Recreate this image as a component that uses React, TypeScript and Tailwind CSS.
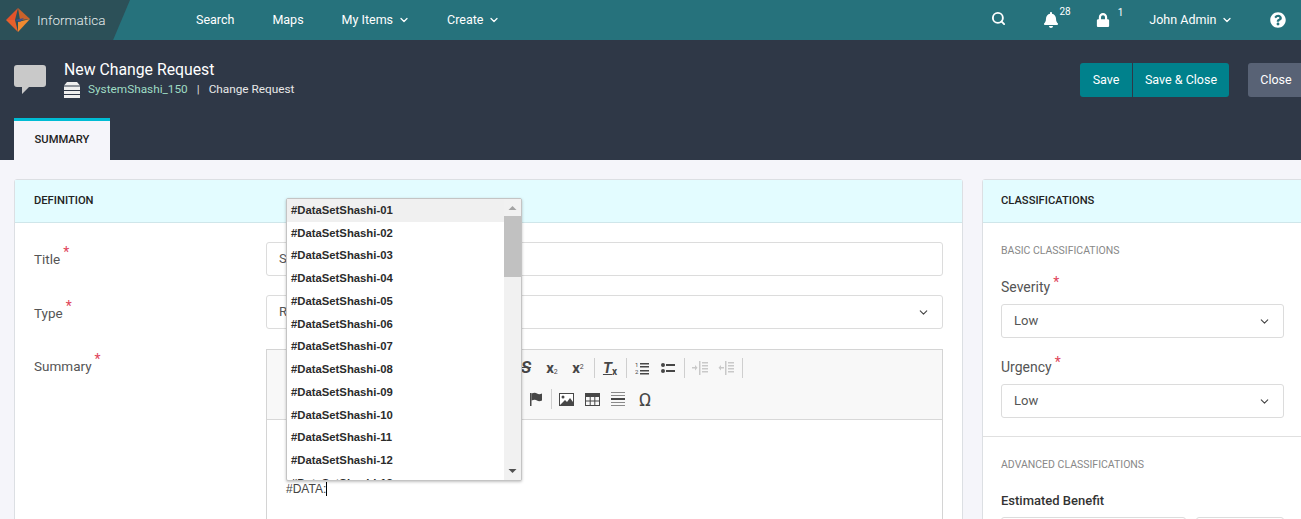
import { ChevronDown, Search } from 'lucide-react'
import { FaBell, FaLock, FaQuestionCircle } from 'react-icons/fa'

const items = ['01', '02', '03', '04', '05', '06', '07', '08', '09', '10', '11', '12', '13']

function Star() {
  return <span className="ml-[3px] -translate-y-[4px] text-[14px] leading-none text-[#e0455a]">*</span>
}

function Sep({ className = '' }: { className?: string }) {
  return <span className={`ml-[3px] mr-[2px] h-[20px] w-px bg-[#cfcfcf] ${className}`} />
}

function Btn({ children }: { children: React.ReactNode }) {
  return <span className="flex h-[26px] w-[26px] items-center justify-center text-[#474747]">{children}</span>
}

function Lines({ indent }: { indent?: boolean }) {
  return (
    <svg width="16" height="14" viewBox="0 0 16 14" fill="#c9c9c9">
      <rect x="7" y="0" width="1.5" height="14" />
      <rect x="10" y="1" width="6" height="1.5" />
      <rect x="10" y="4" width="6" height="1.5" />
      <rect x="10" y="7" width="6" height="1.5" />
      <rect x="10" y="10" width="6" height="1.5" />
      {indent ? <path d="M0 6h3V4l2.5 2.7L3 9.4V7.4H0z" /> : <path d="M6 6H3V4L0.5 6.7 3 9.4V7.4h3z" />}
    </svg>
  )
}

function Select({ value }: { value: string }) {
  return (
    <div className="flex h-[34px] items-center justify-between rounded-[3px] border border-[#dcdcdc] bg-white pl-3 pr-[12px] text-[13px] text-[#555]">
      <span>{value}</span>
      <ChevronDown size={13} strokeWidth={2} className="text-[#444]" />
    </div>
  )
}

export default function App() {
  return (
    <div className="relative h-[519px] w-[1301px] overflow-hidden bg-[#f5f5fa] font-['Roboto',sans-serif]">
      {/* top nav */}
      <div className="flex h-10 items-center bg-[#26727c] text-[12.5px] text-white">
        <div className="flex h-10 w-[130px] shrink-0 items-center bg-[#2c5058] pl-[6px] [clip-path:polygon(0_0,100%_0,87%_100%,0_100%)]">
          <svg width="24" height="24" viewBox="0 0 24 24">
            <path d="M12 0 L24 11 L14 12 Z" fill="#c9622a" />
            <path d="M12 0 L0 12 L9 12 Z" fill="#e2532a" />
            <path d="M0 12 L12 24 L9 12 Z" fill="#e8602c" />
            <path d="M12 24 L24 11 L12 14 Z" fill="#f08a30" />
            <path d="M9 12 L18 10 L14 14 Z" fill="#3d4f8f" />
          </svg>
          <span className="ml-[7px] text-[13.5px] font-light text-[#e8eeee]">Informatica</span>
        </div>
        <span className="ml-[66px]">Search</span>
        <span className="ml-[38px]">Maps</span>
        <span className="ml-[38px] flex items-center gap-[5px]">My Items <ChevronDown size={12} strokeWidth={2.5} /></span>
        <span className="ml-[37px] flex items-center gap-[5px]">Create <ChevronDown size={12} strokeWidth={2.5} /></span>
        <Search size={15} strokeWidth={3} className="ml-[491px] -mt-[3px]" />
        <span className="ml-[37px] flex items-start">
          <FaBell size={16} />
          <span className="-mt-[5px] text-[10px] leading-none">28</span>
        </span>
        <span className="ml-[25px] flex items-start">
          <FaLock size={14} />
          <span className="-mt-[5px] ml-[8px] text-[10px] leading-none">1</span>
        </span>
        <span className="ml-[26px] flex items-center gap-[5px]">John Admin <ChevronDown size={12} strokeWidth={2.5} /></span>
        <FaQuestionCircle size={16} className="ml-[37px]" />
      </div>

      {/* page header */}
      <div className="flex h-[120px] flex-col justify-between bg-[#2f3847] pl-[14px]">
        <div className="flex pt-[20px]">
          <svg width="32" height="30" viewBox="0 0 32 30" className="mt-[5px]">
            <path d="M3 0 H29 a3 3 0 0 1 3 3 V19 a3 3 0 0 1 -3 3 H15 L8 29 V22 H3 a3 3 0 0 1 -3 -3 V3 a3 3 0 0 1 3 -3 Z" fill="#c9c9c9" />
          </svg>
          <div className="ml-[18px]">
            <div className="text-[15.8px] leading-[19px] text-white">New Change Request</div>
            <div className="mt-[1px] flex items-center text-[11.8px] leading-[19px]">
              <svg width="16" height="16" viewBox="0 0 16 16" fill="#eee">
                <path d="M3 0 H13 L16 3.5 H0 Z" />
                <rect x="0" y="4.5" width="16" height="3.5" />
                <rect x="0" y="9" width="16" height="3" />
                <rect x="0" y="13" width="16" height="3" />
              </svg>
              <span className="ml-[8px] text-[#9fdcc4]">SystemShashi_150</span>
              <span className="ml-[9px] text-[#ddd]">|</span>
              <span className="ml-[9px] text-[#e8e8e8]">Change Request</span>
            </div>
          </div>
          <div className="ml-auto flex w-[221px] items-start pt-[3px] text-[12.5px] text-white">
            <div className="flex h-[34px] shrink-0 overflow-hidden rounded-[3px] bg-[#00818c]">
              <span className="flex w-[53px] items-center justify-center border-r border-[#2f3847]">Save</span>
              <span className="flex w-[96px] items-center justify-center">Save &amp; Close</span>
            </div>
            <span className="ml-[19px] flex h-[34px] w-[56px] shrink-0 items-center justify-center rounded-[3px] bg-[#586275]">Close</span>
          </div>
        </div>
        <div className="-mb-px flex h-[43px] w-[96px] items-center justify-center border-t-[3px] border-[#00bcd4] bg-[#f5f5fa] pb-[2px] text-[11.2px] font-medium text-[#222]">SUMMARY</div>
      </div>

      {/* content */}
      <div className="flex gap-[19px] pl-[14px] pt-[19px]">
        <div className="h-[400px] w-[949px] shrink-0 rounded-[3px] border border-[#dcdfe3] bg-white">
          <div className="flex h-[43px] items-center border-b border-[#cfe6ea] bg-[#e3fcff] pl-[19px] pt-px text-[11.2px] font-medium text-[#222]">DEFINITION</div>
          <div className="px-[19px] pt-[19px]">
            <div className="flex items-start">
              <div className="flex w-[232px] pt-[7px] text-[13.5px] text-[#555]">Title<Star /></div>
              <div className="flex h-[34px] flex-1 items-center rounded-[3px] border border-[#dcdcdc] pl-3 text-[13px] text-[#555]">S</div>
            </div>
            <div className="mt-[19px] flex items-start">
              <div className="flex w-[232px] pt-[8px] text-[13.5px] text-[#555]">Type<Star /></div>
              <div className="flex-1"><Select value="R" /></div>
            </div>
            <div className="mt-[20px] flex items-start">
              <div className="flex w-[232px] pt-[7px] text-[13.5px] text-[#555]">Summary<Star /></div>
              <div className="h-[300px] flex-1 border border-[#d4d4d4]">
                <div className="h-[70px] border-b border-[#d8d8d8] bg-[#f8f8f8] pt-[5px]">
                  <div className="flex h-[26px] items-center pl-[246px]">
                    <Btn><span className="text-[17px] font-bold italic text-[#474747] line-through">S</span></Btn>
                    <Btn><span className="text-[15px] font-bold leading-none">x<sub className="text-[7px] font-normal">2</sub></span></Btn>
                    <Btn><span className="text-[15px] font-bold leading-none">x<sup className="text-[7px] font-normal">2</sup></span></Btn>
                    <Sep />
                    <Btn><span className="text-[15px] font-bold italic leading-none underline">T<sub className="text-[10px] not-italic">x</sub></span></Btn>
                    <Sep />
                    <Btn>
                      <svg width="14" height="14" viewBox="0 0 14 14" fill="#474747">
                        <text x="0" y="6" fontSize="6">1</text>
                        <text x="0" y="13" fontSize="6">2</text>
                        <rect x="5" y="2" width="9" height="1.5" />
                        <rect x="5" y="5" width="9" height="1.5" />
                        <rect x="5" y="9" width="9" height="1.5" />
                        <rect x="5" y="12" width="9" height="1.5" />
                      </svg>
                    </Btn>
                    <Btn>
                      <svg width="14" height="12" viewBox="0 0 14 12" fill="#474747">
                        <circle cx="2" cy="3" r="2" />
                        <circle cx="2" cy="9" r="2" />
                        <rect x="5" y="2" width="9" height="2" />
                        <rect x="5" y="8" width="9" height="2" />
                      </svg>
                    </Btn>
                    <Sep className="mr-0" />
                    <Btn><Lines indent /></Btn>
                    <Btn><Lines /></Btn>
                    <Sep />
                  </div>
                  <div className="mt-[5px] flex h-[26px] items-center pl-[256px]">
                    <Btn>
                      <svg width="14" height="14" viewBox="0 0 14 14" fill="#474747">
                        <rect x="1" y="1" width="1.5" height="13" />
                        <path d="M2.5 1.5 Q6 0 8 1.5 T13 1.5 V8.5 Q10 10 8 8.5 T2.5 8.5 Z" />
                      </svg>
                    </Btn>
                    <span className="ml-[2px] h-[20px] w-px bg-[#cfcfcf]" />
                    <span className="ml-px" />
                    <Btn>
                      <svg width="15" height="13" viewBox="0 0 15 13">
                        <rect x="0.5" y="0.5" width="14" height="12" fill="#fff" stroke="#474747" />
                        <circle cx="4" cy="4" r="1.5" fill="#474747" />
                        <path d="M1 12 L6 7 L8 9 L11 5 L14 9 V12 Z" fill="#474747" />
                      </svg>
                    </Btn>
                    <Btn>
                      <svg width="15" height="13" viewBox="0 0 15 13" fill="none" stroke="#474747">
                        <rect x="0.5" y="0.5" width="14" height="12" />
                        <rect x="0.5" y="0.5" width="14" height="3" fill="#474747" />
                        <path d="M0.5 8h14M5.2 3v10M9.8 3v10" />
                      </svg>
                    </Btn>
                    <Btn>
                      <svg width="14" height="14" viewBox="0 0 14 14" fill="#8a8a8a">
                        <rect y="0" width="14" height="1" />
                        <rect y="3" width="14" height="1" />
                        <rect y="6" width="14" height="2" fill="#474747" />
                        <rect y="10" width="14" height="1" />
                        <rect y="13" width="14" height="1" />
                      </svg>
                    </Btn>
                    <span className="ml-px"><Btn><span className="text-[19px] leading-none">Ω</span></Btn></span>
                  </div>
                </div>
                <div className="pl-[19px] pt-[62px] font-['Liberation_Sans',sans-serif] text-[12px] leading-[15px] text-[#444]">
                  #DATA:<span className="border-r border-black" />
                </div>
              </div>
            </div>
          </div>
        </div>

        <div className="h-[400px] w-[322px] shrink-0 rounded-[3px] border border-[#dcdfe3] bg-white">
          <div className="flex h-[43px] items-center border-b border-[#cfe6ea] bg-[#e3fcff] pl-[18px] pt-px text-[11.2px] font-medium text-[#222]">CLASSIFICATIONS</div>
          <div className="h-[214px] border-b border-[#e0e0e0] pl-[18px] pr-[19px]">
            <div className="pt-[21px] text-[10.5px] leading-[13px] text-[#888]">BASIC CLASSIFICATIONS</div>
            <div className="mt-[22px] flex text-[14px] leading-[17px] text-[#555]">Severity<Star /></div>
            <div className="mt-[8px]"><Select value="Low" /></div>
            <div className="mt-[21px] flex text-[14px] leading-[17px] text-[#555]">Urgency<Star /></div>
            <div className="mt-[8px]"><Select value="Low" /></div>
          </div>
          <div className="pl-[18px] pr-[19px]">
            <div className="pt-[21px] text-[10.5px] leading-[13px] text-[#888]">ADVANCED CLASSIFICATIONS</div>
            <div className="mt-[21px] text-[13px] font-medium leading-[17px] text-[#333]">Estimated Benefit</div>
            <div className="mt-[8px] flex gap-[10px]">
              <div className="h-[34px] w-[185px] rounded-[3px] border border-[#dcdcdc]" />
              <div className="h-[34px] w-[88px] rounded-[3px] border border-[#dcdcdc]" />
            </div>
          </div>
        </div>
      </div>

      {/* autocomplete popup */}
      <div className="absolute left-[286px] top-[198px] flex h-[283px] w-[236px] overflow-hidden rounded-[2px] border border-[#c4c4c4] bg-white font-['Liberation_Sans',sans-serif] shadow-[0_1px_3px_rgba(0,0,0,0.25)]">
        <div className="flex-1 overflow-hidden">
          {items.map((n, i) => (
            <div key={n} className={`flex h-[22.75px] shrink-0 items-center pl-[4px] text-[11.3px] font-bold text-[#2b2b2b] ${i === 0 ? 'bg-[#f0f0f0]' : ''}`}>
              #DataSetShashi-{n}
            </div>
          ))}
        </div>
        <div className="flex w-[17px] flex-col items-center bg-[#f1f1f1]">
          <svg width="9" height="17" viewBox="0 0 9 17" className="shrink-0"><path d="M0.5 11 L4.5 7 L8.5 11 Z" fill="#a3a3a3" /></svg>
          <div className="h-[61px] w-full bg-[#c1c1c1]" />
          <svg width="9" height="17" viewBox="0 0 9 17" className="mt-auto shrink-0"><path d="M0.5 6 L4.5 10 L8.5 6 Z" fill="#505050" /></svg>
        </div>
      </div>
    </div>
  )
}
